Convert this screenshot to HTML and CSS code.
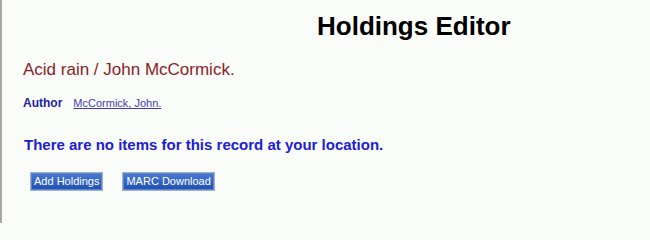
FILE: index.html
```html
<!DOCTYPE html>
<html>
<head>
<meta charset="utf-8">
<title>Holdings Editor</title>
<link rel="stylesheet" href="styles.css">
</head>
<body>
<div class="page">
  <h1 class="page-title">Holdings Editor</h1>
  <div class="content">
    <h2 class="record-title">Acid rain / John McCormick.</h2>
    <div class="field-row">
      <span class="field-label">Author</span>
      <a class="field-link" href="#">McCormick, John.</a>
    </div>
    <p class="notice">There are no items for this record at your location.</p>
    <div class="actions">
      <button class="btn" type="button">Add Holdings</button>
      <button class="btn" type="button">MARC Download</button>
    </div>
  </div>
</div>
</body>
</html>
```
FILE: styles.css
```css
html, body {
  margin: 0;
  padding: 0;
  background: #fafcfa;
}
body {
  font-family: "Liberation Sans", Arial, sans-serif;
}
.page {
  box-sizing: border-box;
  height: 223px;
  border-left: 2px solid #a8a8a0;
  padding-top: 11px;
}
.page-title {
  margin: 0;
  padding-left: 315px;
  font-size: 26px;
  line-height: 30px;
  font-weight: bold;
  color: #000;
}
.content {
  padding-left: 21px;
}
.record-title {
  margin: 19px 0 0 0;
  font-size: 17px;
  line-height: 20px;
  font-weight: normal;
  color: #8b2222;
}
.field-row {
  display: flex;
  align-items: baseline;
  gap: 11px;
  margin-top: 16px;
  line-height: 14px;
}
.field-label {
  font-size: 12px;
  font-weight: bold;
  color: #2323a0;
}
.field-link {
  font-size: 11px;
  color: #4040b4;
  text-decoration: underline;
}
.notice {
  margin: 26px 0 0 1px;
  font-size: 15px;
  line-height: 17px;
  font-weight: bold;
  color: #2020d0;
}
.actions {
  display: flex;
  gap: 19px;
  margin: 19px 0 0 7px;
}
.btn {
  box-sizing: border-box;
  height: 19px;
  padding: 0 3px;
  font-family: "Liberation Sans", Arial, sans-serif;
  font-size: 11px;
  line-height: 15px;
  color: #fff;
  border: 1px solid #9fb0cc;
  box-shadow: inset 0 0 0 1px #5d86cf;
  background: linear-gradient(#4a7bd4, #1f4faf);
  border-radius: 0;
  cursor: pointer;
}
```
